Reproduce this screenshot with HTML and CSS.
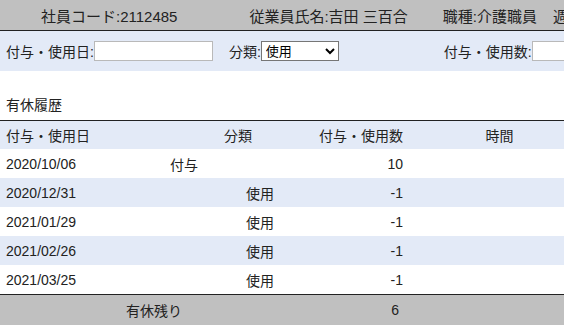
FILE: index.html
```html
<!DOCTYPE html>
<html>
<head>
    <title>有休履歴</title>
    <link rel="stylesheet" href="styles.css">
</head>
<body>
    <div class="emp-bar">
        <span class="emp-code">社員コード:2112485</span>
        <span class="emp-name">従業員氏名:吉田 三百合</span>
        <span class="emp-job">職種:介護職員</span>
        <span class="emp-week">週所定労働日数:5</span>
    </div>

    <form class="filter" id="filterForm">
        <label>付与・使用日:<input type="text" class="date-input" name="date"></label>
        <label class="type-label">分類:<select name="type" class="type-select">
            <option>使用</option>
            <option>付与</option>
        </select></label>
        <label class="count-label">付与・使用数:<input type="text" class="count-input" name="count"></label>
    </form>

    <h3 class="section-title">有休履歴</h3>

    <table class="history">
        <colgroup>
            <col class="c-date">
            <col class="c-type">
            <col class="c-count">
            <col class="c-time">
        </colgroup>
        <thead>
            <tr>
                <th class="date">付与・使用日</th>
                <th class="type">分類</th>
                <th class="num">付与・使用数</th>
                <th class="time">時間</th>
            </tr>
        </thead>
        <tbody>
            <tr>
                <td class="date">2020/10/06</td>
                <td class="grant">付与</td>
                <td class="num">10</td>
                <td></td>
            </tr>
            <tr>
                <td class="date">2020/12/31</td>
                <td class="use">使用</td>
                <td class="num">-1</td>
                <td></td>
            </tr>
            <tr>
                <td class="date">2021/01/29</td>
                <td class="use">使用</td>
                <td class="num">-1</td>
                <td></td>
            </tr>
            <tr>
                <td class="date">2021/02/26</td>
                <td class="use">使用</td>
                <td class="num">-1</td>
                <td></td>
            </tr>
            <tr>
                <td class="date">2021/03/25</td>
                <td class="use">使用</td>
                <td class="num">-1</td>
                <td></td>
            </tr>
        </tbody>
        <tfoot>
            <tr>
                <td colspan="2" class="rest-label">有休残り</td>
                <td class="rest-num">6</td>
                <td></td>
            </tr>
        </tfoot>
    </table>
</body>
</html>
```

FILE: styles.css
```css
html, body { overflow: hidden; }
body { margin: 0; font-family: "Liberation Sans", "Noto Sans CJK JP", sans-serif; font-size: 14px; color: #222; width: 600px; }

.emp-bar { display: flex; align-items: center; height: 30px; background: #c0c0c0; border-bottom: 1px solid #222; font-size: 15px; white-space: nowrap; }
.emp-code { margin-left: 41px; }
.emp-name { margin-left: 72px; }
.emp-job { margin-left: 35px; }
.emp-week { margin-left: 16px; }

.filter { display: flex; align-items: center; height: 40px; background: #e3eaf7; padding-left: 6px; white-space: nowrap; }
.filter label { display: flex; align-items: center; }
.date-input, .count-input { width: 113px; height: 16px; padding: 1px 2px; border: 1px solid #b9b9b9; font-family: inherit; font-size: 13px; }
.type-label { margin-left: 16px; }
.type-select { width: 78px; height: 20px; font-family: inherit; font-size: 13px; border: 1px solid #767676; background: #fff; color: #000; }
.count-label { margin-left: 105px; }

.section-title { margin: 24px 0 5px 6px; font-size: 14px; font-weight: normal; line-height: 20px; }

.history { width: 589px; border-collapse: collapse; table-layout: fixed; }
.c-date { width: 164px; }
.c-type { width: 148px; }
.c-count { width: 98px; }
.c-time { width: 179px; }
.history th, .history td { padding: 0; height: 29px; font-weight: normal; white-space: nowrap; }
.history thead tr { background: #e3eaf7; border-top: 1px solid #222; }
.history thead th { height: 28px; }
.history tbody tr:nth-child(even) { background: #e3eaf7; }
.history .date { text-align: left; padding-left: 6px; }
.history .type { text-align: center; }
.history .time { text-align: center; }
.history .num { text-align: right; padding-right: 7px; }
.history .grant { text-align: left; padding-left: 6px; }
.history .use { text-align: left; padding-left: 82px; }
.history tfoot tr { background: #c0c0c0; border-top: 1px solid #222; }
.history tfoot td { height: 30px; }
.history .rest-label { text-align: center; padding-right: 4px; }
.history .rest-num { text-align: right; padding-right: 11px; }
```
